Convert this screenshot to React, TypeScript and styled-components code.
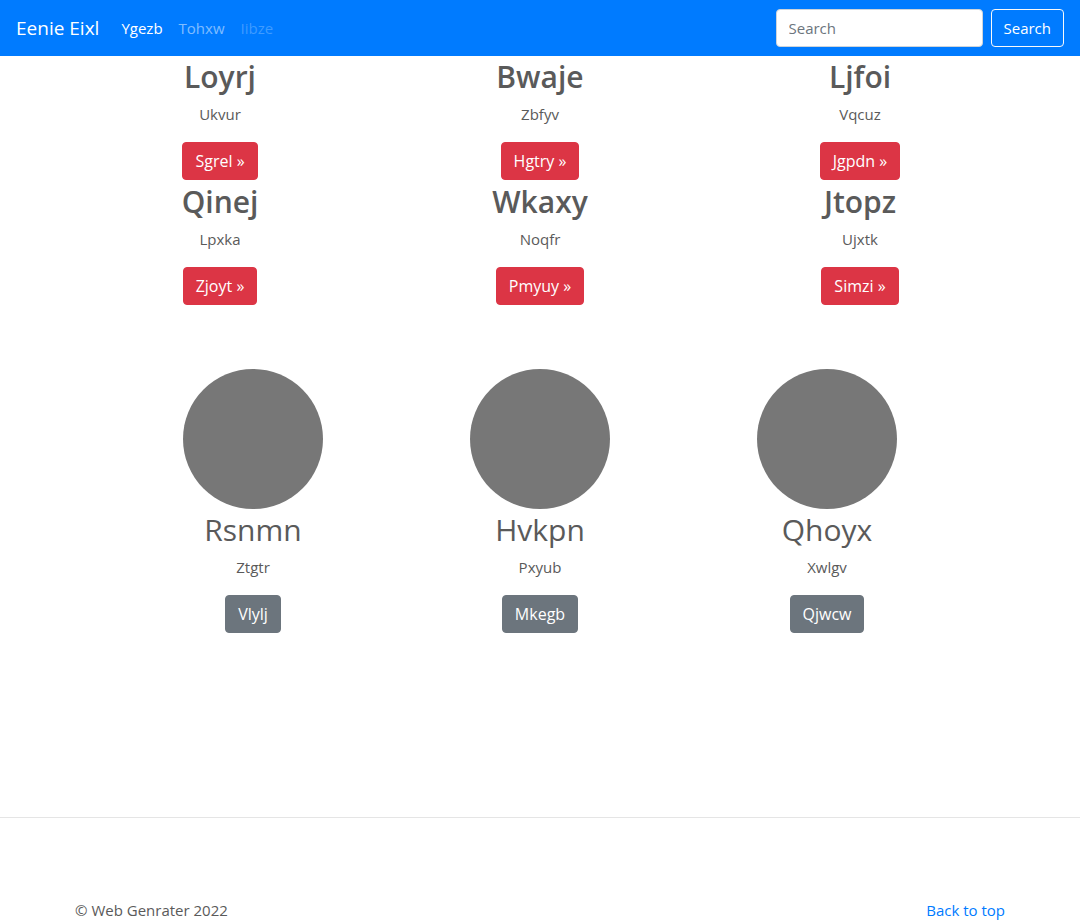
import React from "react";
import styled, { createGlobalStyle } from "styled-components";

const GlobalStyle = createGlobalStyle`
  *, *::before, *::after { box-sizing: border-box; }
  body {
    margin: 0;
    background: #fff;
    color: #5a5a5a;
    font: 400 15px/24px "Segoe UI", "Open Sans", "Noto Sans", sans-serif;
  }
`;

const Navbar = styled.header`
  display: flex;
  align-items: center;
  height: 56px;
  padding: 0 16px;
  background: #007bff;
`;

const Brand = styled.a`
  margin-right: 14px;
  color: #fff;
  font-size: 19px;
  line-height: 30px;
  text-decoration: none;
  white-space: nowrap;
`;

const NavLinks = styled.nav`
  display: flex;
  flex: 1;
`;

const NavLink = styled.a<{ $alpha: number }>`
  padding: 8px;
  color: rgba(255, 255, 255, ${(p) => p.$alpha});
  text-decoration: none;
`;

const SearchForm = styled.form`
  display: flex;
  gap: 8px;
`;

const SearchInput = styled.input`
  width: 207px;
  height: 38px;
  padding: 6px 12px;
  border: 1px solid #ced4da;
  border-radius: 4px;
  background: #fff;
  color: #495057;
  font: inherit;
  &::placeholder { color: #6c757d; opacity: 1; }
`;

const tones = {
  outline: { fill: "transparent", edge: "#f8f9fa" },
  danger: { fill: "#dc3545", edge: "#dc3545" },
  secondary: { fill: "#6c757d", edge: "#6c757d" },
};

const Button = styled.button<{ $tone: keyof typeof tones }>`
  height: 38px;
  padding: 6px 12px;
  border: 1px solid ${(p) => tones[p.$tone].edge};
  border-radius: 4px;
  background: ${(p) => tones[p.$tone].fill};
  color: #fff;
  font: inherit;
  cursor: pointer;
`;

const CardButton = styled(Button)`
  font-size: 16px;
`;

const Features = styled.section`
  display: grid;
  grid-template-columns: repeat(3, 1fr);
  row-gap: 1px;
  max-width: 960px;
  margin: 0 auto;
`;

const Profiles = styled(Features)`
  max-width: 861px;
  margin-top: 64px;
`;

const Card = styled.article`
  display: flex;
  flex-direction: column;
  align-items: center;
  text-align: center;
`;

const Title = styled.h2<{ $weight: number }>`
  margin: 0 0 4px;
  font-size: 30px;
  font-weight: ${(p) => p.$weight};
  line-height: 42px;
`;

const Text = styled.p`
  margin: 0 0 16px;
`;

const Avatar = styled.div`
  width: 140px;
  height: 140px;
  border-radius: 50%;
  background: #777;
`;

const Divider = styled.hr`
  margin: 184px 0 80px;
  border: 0;
  border-top: 1px solid rgba(0, 0, 0, 0.1);
`;

const Footer = styled.footer`
  display: flex;
  justify-content: space-between;
  max-width: 960px;
  margin: 0 auto;
  padding: 0 15px;
`;

const FooterLink = styled.a`
  color: #007bff;
  text-decoration: none;
`;

const features = [
  ["Loyrj", "Ukvur", "Sgrel"],
  ["Bwaje", "Zbfyv", "Hgtry"],
  ["Ljfoi", "Vqcuz", "Jgpdn"],
  ["Qinej", "Lpxka", "Zjoyt"],
  ["Wkaxy", "Noqfr", "Pmyuy"],
  ["Jtopz", "Ujxtk", "Simzi"],
];

const profiles = [
  ["Rsnmn", "Ztgtr", "Vlylj"],
  ["Hvkpn", "Pxyub", "Mkegb"],
  ["Qhoyx", "Xwlgv", "Qjwcw"],
];

export default function App() {
  return (
    <>
      <GlobalStyle />
      <Navbar id="top">
        <Brand href="#">Eenie Eixl</Brand>
        <NavLinks>
          <NavLink href="#" $alpha={1}>Ygezb</NavLink>
          <NavLink href="#" $alpha={0.5}>Tohxw</NavLink>
          <NavLink href="#" $alpha={0.25} aria-disabled="true">Iibze</NavLink>
        </NavLinks>
        <SearchForm onSubmit={(e) => e.preventDefault()}>
          <SearchInput type="search" placeholder="Search" aria-label="Search" />
          <Button type="submit" $tone="outline">Search</Button>
        </SearchForm>
      </Navbar>
      <main>
        <Features>
          {features.map(([title, text, action]) => (
            <Card key={title}>
              <Title $weight={600}>{title}</Title>
              <Text>{text}</Text>
              <CardButton type="button" $tone="danger">{action} »</CardButton>
            </Card>
          ))}
        </Features>
        <Profiles>
          {profiles.map(([title, text, action]) => (
            <Card key={title}>
              <Avatar />
              <Title $weight={400}>{title}</Title>
              <Text>{text}</Text>
              <CardButton type="button" $tone="secondary">{action}</CardButton>
            </Card>
          ))}
        </Profiles>
      </main>
      <Divider />
      <Footer>
        <span>© Web Genrater 2022</span>
        <FooterLink href="#top">Back to top</FooterLink>
      </Footer>
    </>
  );
}
